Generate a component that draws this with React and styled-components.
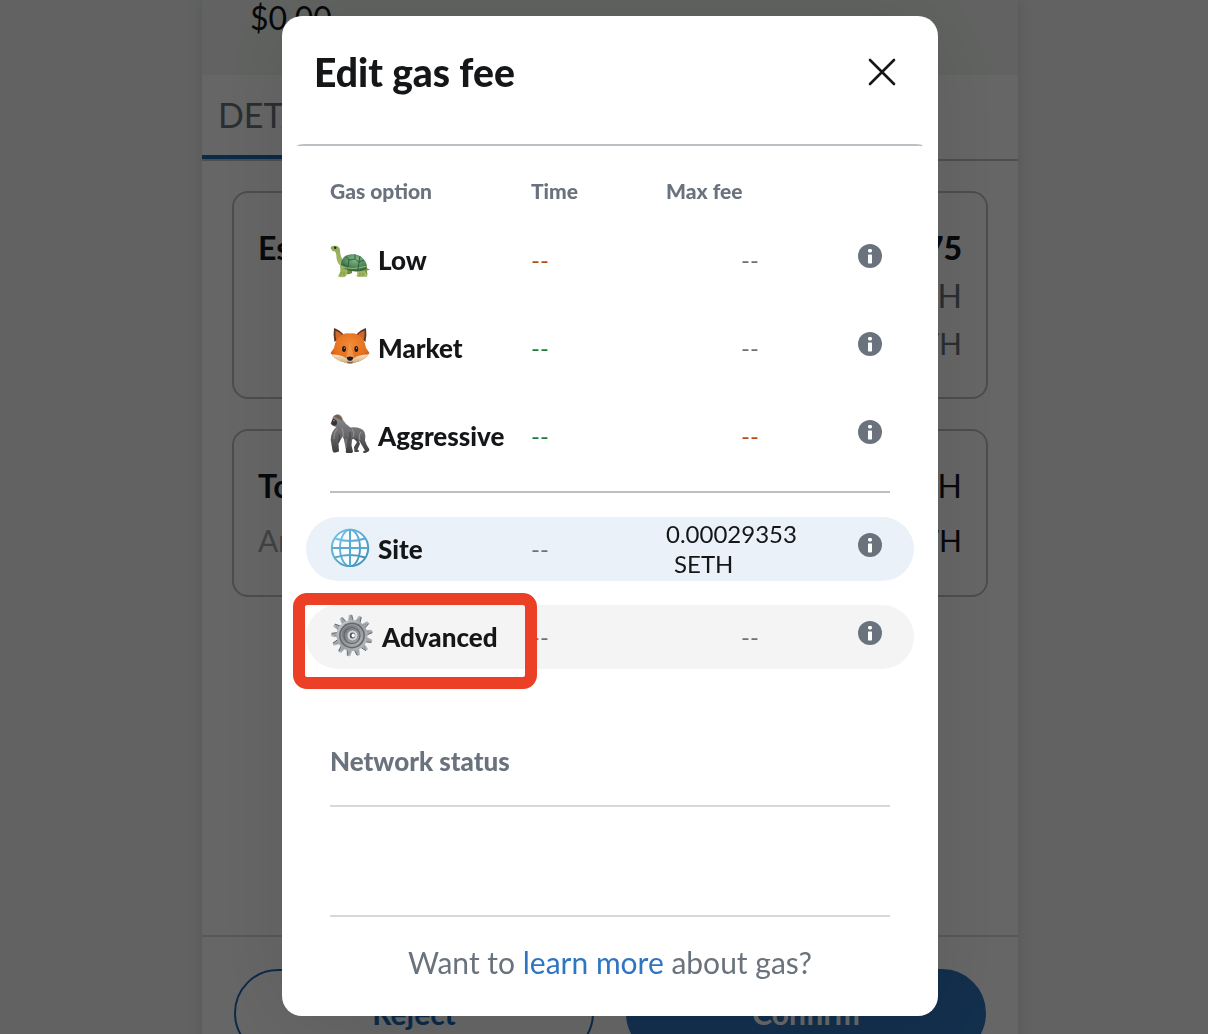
import React from "react";
import styled, { createGlobalStyle } from "styled-components";

const GlobalStyle = createGlobalStyle`
  *, *::before, *::after { box-sizing: border-box; }
  body {
    margin: 0;
    background: #f2f6f3;
    color: #141618;
    font-family: Lato, "Open Sans", "Liberation Sans", sans-serif;
  }
  button { font: inherit; color: inherit; cursor: pointer; }
`;

/* ---------- Confirmation page behind the dialog ---------- */

const Page = styled.div`
  height: 100vh;
  overflow: hidden;
  display: flex;
  justify-content: center;
  padding-left: 12px;
`;

const Column = styled.main`
  width: 100%;
  max-width: 816px;
  display: flex;
  flex-direction: column;
  flex: 0 1 816px;
  height: max-content;
  background: #fff;
  box-shadow: 0 0 14px rgba(0, 0, 0, 0.12);
`;

const Summary = styled.header`
  height: 75px;
  padding: 0 48px;
  background: #f2f6f3;
  font-size: 32px;
  line-height: 36px;
`;

const Tabs = styled.nav`
  display: flex;
  height: 86px;
  border-bottom: 2px solid #bbc0c5;
`;

const Tab = styled.button`
  padding: 0 16px;
  border: 0;
  border-bottom: 4px solid #1b69b5;
  background: none;
  color: #6a737d;
  font-size: 34px;
  line-height: 76px;
`;

const Cards = styled.div`
  display: flex;
  flex-direction: column;
  gap: 30px;
  height: 774px;
  padding: 30px;
`;

const Card = styled.section`
  height: ${(p) => p.$height};
  padding: 31px 24px;
  border: 2px solid #bbc0c5;
  border-radius: 16px;
`;

const CardLine = styled.div`
  display: flex;
  justify-content: space-between;
  color: ${(p) => (p.$muted ? "#6a737d" : "#141618")};
  font-size: ${(p) => (p.$small ? "30px" : "32px")};
  line-height: ${(p) => p.$line || "48px"};
`;

const CardName = styled.span`
  color: ${(p) => (p.$muted ? "#9fa6ae" : "inherit")};
  font-weight: ${(p) => (p.$muted ? 400 : 700)};
`;

const CardValue = styled.span`
  margin-left: auto;
  font-weight: ${(p) => (p.$strong ? 900 : 400)};
`;

const Actions = styled.footer`
  display: flex;
  gap: 32px;
  padding: 32px;
  border-top: 2px solid #d6d9dc;
`;

const Action = styled.button`
  flex: 1;
  height: 88px;
  border: 2px solid ${(p) => (p.$primary ? "#2f75bf" : "#1b69b5")};
  border-radius: 44px;
  background: ${(p) => (p.$primary ? "#2f75bf" : "transparent")};
  color: ${(p) => (p.$primary ? "#fff" : "#1b69b5")};
  font-size: 30px;
  font-weight: 700;
`;

/* ---------- Dialog ---------- */

const Overlay = styled.div`
  position: fixed;
  inset: 0;
  display: flex;
  justify-content: center;
  align-items: flex-start;
  padding: 16px 0 16px 12px;
  background: rgba(0, 0, 0, 0.6);
`;

const Dialog = styled.section`
  flex: 0 1 656px;
  border-radius: 20px;
  background: #fff;
  box-shadow: 0 4px 88px rgba(0, 0, 0, 0.1);
`;

const DialogHeader = styled.header`
  display: flex;
  align-items: center;
  justify-content: space-between;
  height: 112px;
  padding: 0 42px 0 32px;
`;

const Title = styled.h1`
  margin: 0;
  font-size: 39px;
  font-weight: 900;
  line-height: 48px;
`;

const IconButton = styled.button`
  display: flex;
  padding: 0;
  border: 0;
  background: none;
`;

const HeaderRule = styled.hr`
  height: 2px;
  margin: 16px 15px 0;
  border: 0;
  border-radius: 8px 8px 0 0 / 2px 2px 0 0;
  background: #bbc0c5;
`;

const Body = styled.div`
  padding: 30px 24px 0;
`;

const Options = styled.table`
  display: block;
`;

const HeadGroup = styled.thead`
  display: block;
  margin-bottom: 22px;
`;

const OptionGroup = styled.tbody`
  display: flex;
  flex-direction: column;
  gap: 24px;
`;

const CustomGroup = styled(OptionGroup)`
  &::before {
    content: "";
    height: 2px;
    margin: 23px 24px 0;
    background: #bbc0c5;
  }
`;

const Row = styled.tr`
  position: relative;
  display: grid;
  grid-template-columns: 201fr 135fr 168fr 56fr;
  align-items: center;
  height: ${(p) => (p.$head ? "30px" : "64px")};
  padding: 0 24px;
  border-radius: 32px;
  background: ${(p) => p.$fill || "transparent"};
`;

const HeadCell = styled.th`
  padding: 0;
  color: #6a737d;
  font-size: 21px;
  font-weight: 900;
  line-height: 28px;
  text-align: left;
`;

const NameCell = styled.th`
  padding: 0;
  text-align: left;
`;

const OptionButton = styled.button`
  display: flex;
  align-items: center;
  gap: 8px;
  padding: 0;
  border: 0;
  background: none;
  font-size: 26px;
  font-weight: 900;
  line-height: 28px;
  white-space: nowrap;

  svg { flex: none; margin-bottom: 4px; }
`;

const tones = { muted: "#6a737d", warn: "#bc4b13", good: "#1e7e34", plain: "#141618" };

const Cell = styled.td`
  padding: 0;
  color: ${(p) => tones[p.$tone]};
  font-size: 24px;
  line-height: 30px;
  text-align: ${(p) => (p.$center ? "center" : "left")};
`;

const Unit = styled.span`
  display: block;
  padding-left: 8px;
`;

const InfoCell = styled.td`
  display: flex;
  justify-content: flex-end;
  padding: 0 8px 8px 0;
`;

const Highlight = styled.span`
  position: absolute;
  top: -12px;
  left: -13px;
  width: 244px;
  height: 96px;
  border: 12px solid #eb4026;
  border-radius: 14px;
  pointer-events: none;
`;

const Network = styled.section`
  margin: 0 24px;
  padding: 76px 0 108px;
`;

const NetworkTitle = styled.h2`
  margin: 0;
  padding-bottom: 28px;
  border-bottom: 2px solid #d6d9dc;
  color: #6a737d;
  font-size: 26px;
  font-weight: 900;
  line-height: 32px;
`;

const Help = styled.p`
  margin: 0 24px;
  padding: 25px 0 34px;
  border-top: 2px solid #d6d9dc;
  color: #6a737d;
  font-size: 30px;
  line-height: 40px;
  text-align: center;
`;

const HelpLink = styled.a`
  color: #2f75c4;
  text-decoration: none;
`;

/* ---------- Icons ---------- */

const CloseIcon = () => (
  <svg width="28" height="28" viewBox="0 0 28 28" fill="none" stroke="#141618" strokeWidth="2.6" strokeLinecap="round" aria-hidden="true">
    <path d="M2 2 26 26M26 2 2 26" />
  </svg>
);

const InfoIcon = () => (
  <svg width="24" height="24" viewBox="0 0 24 24" aria-hidden="true">
    <circle cx="12" cy="12" r="12" fill="#6a737d" />
    <rect x="10" y="5" width="4" height="3.4" rx="1.4" fill="#fff" />
    <rect x="10" y="10.4" width="4" height="9" rx="0.6" fill="#fff" />
  </svg>
);

const TurtleIcon = () => (
  <svg width="40" height="40" viewBox="0 0 40 40" aria-hidden="true">
    <defs>
      <radialGradient id="shell" cx="0.55" cy="0.3" r="0.75">
        <stop offset="0" stopColor="#86b98a" />
        <stop offset="0.6" stopColor="#4c8759" />
        <stop offset="1" stopColor="#2c5a38" />
      </radialGradient>
      <linearGradient id="skin" x1="0" y1="0" x2="0" y2="1">
        <stop offset="0" stopColor="#8fa957" />
        <stop offset="1" stopColor="#a9bb6c" />
      </linearGradient>
    </defs>
    <path d="M34 28q3 3 6 3.500-3 2-7 .5Z" fill="#789247" />
    <path d="M17 30h5v5q-3 2-6 1Z M32 29l4 1 1.500 6q-1 2-4 1Z" fill="#718a40" />
    <path d="M.7 10.500Q.5 7.500 4.500 7.700 9.800 7.700 10 12.500 10 19 14.500 24L13 30Q7 26 6.500 20 6.500 15 5 13.500 1.500 13 .7 10.500Z" fill="url(#skin)" />
    <path d="M10 27q3 4 8 3l-1 5.500q-.5 3.500-4 3.700l-4.500-.3q-1-1.800 1-3.200 1.500-3 .5-8.700Z M26 31l9-2q-1 4 1 5.500 2 2 1 4.300l-9 .3q-2.500-1.300-.5-3.700Z" fill="url(#skin)" />
    <path d="M11 27Q11 17 21 16.300 33 15 37 27.500 37.500 32 31 33 17 35 11 27Z" fill="url(#shell)" />
    <path d="M11.500 28Q20 33 37 28" fill="none" stroke="#9ab36b" strokeWidth="1.200" />
    <path d="M16 18.500l3 3.500-1 7M19 22l6-1 4 3 5-2M25 21l0-5M29 24l-1 7.500M18 29l-5-3M29 24l1-6" fill="none" stroke="#244f30" strokeWidth=".8" />
    <circle cx="5.200" cy="9.800" r="1.200" fill="#1d2113" />
    <path d="M11 34v3.500M14 34v4M30 35v3M33 35v3" stroke="#647c37" strokeWidth=".6" />
  </svg>
);

const FoxIcon = () => (
  <svg width="40" height="40" viewBox="0 0 40 40" aria-hidden="true">
    <defs>
      <radialGradient id="fur" cx="0.5" cy="0.35" r="0.65">
        <stop offset="0" stopColor="#f28a35" />
        <stop offset="0.7" stopColor="#e36f1d" />
        <stop offset="1" stopColor="#b94f12" />
      </radialGradient>
      <linearGradient id="muzzle" x1="0" y1="0" x2="0" y2="1">
        <stop offset="0" stopColor="#fbe3bf" />
        <stop offset="1" stopColor="#c5a77e" />
      </linearGradient>
    </defs>
    <path d="M4 2Q3 9 4.500 16L14 9Q10 4 4 2ZM36 2q1 7-.5 14L26 9q4-5 10-7Z" fill="#5a351f" />
    <path d="M5.500 4.500Q5 10 6.500 15L13 10Q10 6 5.500 4.500ZM34.500 4.500q.5 5.500-1 10.500L27 10q3-4 7.500-5.500Z" fill="#d4662b" />
    <path d="M20 7.500Q27 6.500 32 12 35 16 36 22L39.500 27Q34 35 25 36.500L20 38l-5-1.500Q6 35 .5 27L4 22q1-6 4-10 5-5.500 12-4.500Z" fill="url(#fur)" />
    <path d="M1.500 28.500Q10 28 16 32l4-3 4 3q6-4 14.500-3.500Q33 35 25 36.500L20 38l-5-1.500Q7 35 1.500 28.500Z" fill="url(#muzzle)" />
    <path d="M20 16q2.500 10 4 15-4 3-8 0 1.500-5 4-15Z" fill="#f09a49" opacity=".8" />
    <ellipse cx="14" cy="23" rx="1.900" ry="3" fill="#24180f" />
    <ellipse cx="26.300" cy="23" rx="1.900" ry="3" fill="#24180f" />
    <circle cx="14.300" cy="22" r=".6" fill="#fff" />
    <circle cx="26.600" cy="22" r=".6" fill="#fff" />
    <path d="M16.700 31.500q3.300-2 6.600 0 .3 1.500-2 3.200h-2.600q-2.300-1.700-2-3.200Z" fill="#211a1a" />
    <path d="M17 36q3 1.400 6 0" fill="none" stroke="#59412e" strokeWidth=".8" />
  </svg>
);

const GorillaIcon = () => (
  <svg width="40" height="40" viewBox="0 0 40 40" aria-hidden="true">
    <defs>
      <linearGradient id="coat" x1="0" y1="0" x2="0" y2="1">
        <stop offset="0" stopColor="#8d8d90" />
        <stop offset="0.5" stopColor="#6b6b6f" />
        <stop offset="1" stopColor="#3b3b3e" />
      </linearGradient>
    </defs>
    <path d="M23 24l4 4-3 5 .5 5h4l.5-1.500-1.500-1 2.500-5.500-2-6Z" fill="#4a4a4d" />
    <path d="M2 7Q2 1 7.500.3 12 1 13 6q3 5 7.500 7.500Q31 12.500 34.500 18q1.500 4 .5 8.500 1 4 4.500 9l-1 2q-3 1.500-5 1.500l-.5-1.500 2-1-5-8.500-3-4-5 1.500-.5 6 1.500 6-1 1.500h-5.500q-1.500-1.500-.5-3l-2-10.500-1.500-3L8.500 29.500l.5 8-3.500 1H3.500l-1-2L.7 26Q1 17 6.500 13 2 12 .5 9.500Z" fill="url(#coat)" />
    <path d="M1.300 9Q1.500 6 3.500 4.500l3 2Q8 10 5.500 11.500 2 12 1.300 9Z" fill="#353338" />
    <path d="M4 2.500Q7-1 10.500 2.300L12.500 7 9 5Z" fill="#775b4d" />
    <circle cx="4" cy="6.700" r=".7" fill="#d9a86d" />
    <path d="M12 14q2 5 1 9M22 15q3 4 1 8M7 15q-3 4-3 10M31 18q-3 4-1 8M16 25v9" fill="none" stroke="#a8a8ac" strokeWidth="1.200" opacity=".6" />
    <path d="M9 20q1 4-.5 9M20 18q1 5-1 9" fill="none" stroke="#343438" strokeWidth="1" opacity=".7" />
  </svg>
);

const GlobeIcon = () => (
  <svg width="40" height="40" viewBox="0 0 40 40" fill="none" aria-hidden="true">
    <defs>
      <linearGradient id="ocean" x1="0" y1="0" x2="1" y2="1">
        <stop offset="0" stopColor="#77c3e4" />
        <stop offset="1" stopColor="#3d8fba" />
      </linearGradient>
    </defs>
    <circle cx="20" cy="21" r="18.200" fill="#f8fcff" stroke="url(#ocean)" strokeWidth="2" />
    <ellipse cx="20" cy="21" rx="10" ry="18.200" stroke="url(#ocean)" strokeWidth="1.900" />
    <path d="M5 11.500q15 5 30 0M5 30.500q15-5 30 0" stroke="url(#ocean)" strokeWidth="1.900" />
    <path d="M20 3v36M2 21h36" stroke="#58abd0" strokeWidth="2" />
  </svg>
);

const GearIcon = () => (
  <svg width="44" height="44" viewBox="0 0 44 44" aria-hidden="true">
    <defs>
      <linearGradient id="steel" x1="0" y1="0" x2="1" y2="1">
        <stop offset="0" stopColor="#ccd2d8" />
        <stop offset="0.5" stopColor="#9a9fa5" />
        <stop offset="1" stopColor="#b8bdc2" />
      </linearGradient>
      <linearGradient id="hub" x1="0" y1="0" x2="1" y2="1">
        <stop offset="0" stopColor="#6a6d70" />
        <stop offset="1" stopColor="#b8bbbe" />
      </linearGradient>
    </defs>
    {Array.from({ length: 13 }, (_, i) => (
      <g key={i} transform={`rotate(${(i * 360) / 13 - 5} 22 22.500)`}>
        <path d="M19.500 9l.9-7q1.600-1.200 3.200 0L24.500 9Z" fill="url(#steel)" />
        <path d="M23.500 2 24.500 8" stroke="#55585c" strokeWidth=".8" />
      </g>
    ))}
    <circle cx="22" cy="22.500" r="15.500" fill="url(#steel)" />
    <circle cx="22" cy="22.500" r="12.900" fill="#66696c" />
    <circle cx="22" cy="22.500" r="11" fill="url(#hub)" stroke="#a2a5a8" strokeWidth=".8" />
    <circle cx="22" cy="22.500" r="8" fill="none" stroke="#606367" strokeWidth="1.200" />
    <circle cx="22.500" cy="22.500" r="5.500" fill="#d4d7da" stroke="#77797d" strokeWidth=".8" />
    <ellipse cx="22.500" cy="22.500" rx="2.700" ry="3" fill="#4c4f52" />
    <ellipse cx="23.200" cy="22.600" rx="1.700" ry="2" fill="#fff" />
  </svg>
);

/* ---------- Data ---------- */

const suggested = [
  { name: "Low", Icon: TurtleIcon, time: "warn", fee: "muted" },
  { name: "Market", Icon: FoxIcon, time: "good", fee: "muted" },
  { name: "Aggressive", Icon: GorillaIcon, time: "good", fee: "warn" },
];

const custom = [
  { name: "Site", Icon: GlobeIcon, time: "muted", amount: "0.00029353", unit: "SETH", fill: "#eaf1f9" },
  { name: "Advanced", Icon: GearIcon, time: "muted", fee: "muted", fill: "#f4f4f4", highlighted: true },
];

function Option({ name, Icon, time, fee, amount, unit, fill, highlighted }) {
  return (
    <Row $fill={fill}>
      <NameCell scope="row">
        <OptionButton type="button">
          <Icon />
          {name}
        </OptionButton>
        {highlighted && <Highlight />}
      </NameCell>
      <Cell $tone={time}>--</Cell>
      {amount ? (
        <Cell $tone="plain">
          {amount} <Unit>{unit}</Unit>
        </Cell>
      ) : (
        <Cell $tone={fee} $center>--</Cell>
      )}
      <InfoCell>
        <IconButton type="button" aria-label={`About ${name}`}>
          <InfoIcon />
        </IconButton>
      </InfoCell>
    </Row>
  );
}

export default function App() {
  return (
    <>
      <GlobalStyle />
      <Page>
        <Column>
          <Summary>$0.00</Summary>
          <Tabs>
            <Tab type="button">DETAILS</Tab>
          </Tabs>
          <Cards>
            <Card $height="208px">
              <CardLine>
                <CardName>Es</CardName>
                <CardValue $strong>75</CardValue>
              </CardLine>
              <CardLine $muted><CardValue>SETH</CardValue></CardLine>
              <CardLine $muted $small $line="46px"><CardValue>SETH</CardValue></CardLine>
            </Card>
            <Card $height="168px">
              <CardLine>
                <CardName>To</CardName>
                <CardValue>SETH</CardValue>
              </CardLine>
              <CardLine $small $line="60px">
                <CardName $muted>Am</CardName>
                <CardValue>SETH</CardValue>
              </CardLine>
            </Card>
          </Cards>
          <Actions>
            <Action type="button">Reject</Action>
            <Action type="button" $primary>Confirm</Action>
          </Actions>
        </Column>
      </Page>
      <Overlay>
        <Dialog role="dialog" aria-modal="true" aria-labelledby="gas-title">
          <DialogHeader>
            <Title id="gas-title">Edit gas fee</Title>
            <IconButton type="button" aria-label="Close">
              <CloseIcon />
            </IconButton>
          </DialogHeader>
          <HeaderRule />
          <Body>
            <Options>
              <HeadGroup>
                <Row $head>
                  <HeadCell scope="col">Gas option</HeadCell>
                  <HeadCell scope="col">Time</HeadCell>
                  <HeadCell scope="col">Max fee</HeadCell>
                </Row>
              </HeadGroup>
              <OptionGroup>
                {suggested.map((o) => <Option key={o.name} {...o} />)}
              </OptionGroup>
              <CustomGroup>
                {custom.map((o) => <Option key={o.name} {...o} />)}
              </CustomGroup>
            </Options>
            <Network>
              <NetworkTitle>Network status</NetworkTitle>
            </Network>
            <Help>
              Want to <HelpLink href="#gas">learn more</HelpLink> about gas?
            </Help>
          </Body>
        </Dialog>
      </Overlay>
    </>
  );
}
